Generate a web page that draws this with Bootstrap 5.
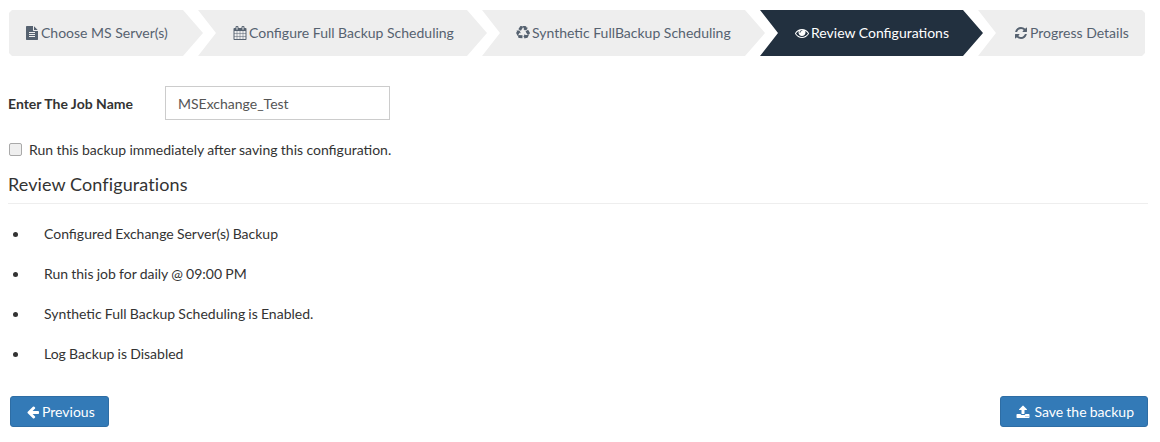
<!DOCTYPE html>
<html lang="en">
<head>
  <meta charset="UTF-8" />
  <title>Review Configurations</title>
  <link href="https://cdn.jsdelivr.net/npm/bootstrap@5.3.0/dist/css/bootstrap.min.css" rel="stylesheet">
  <style>
    body {
      font-family: Lato, sans-serif;
      font-size: 14px;
      color: #333;
      background: #fff;
      overflow: hidden;
    }
    .page-wrap { padding: 10px 12px 0 8px; }
    .wizard-steps { display: flex; height: 46px; margin: 0 3px 0 1px; }
    .wizard-step {
      background: #eee;
      color: #566270;
      height: 46px;
      margin-right: -5px;
      padding-left: 35px;
      padding-bottom: 1px;
      flex: none;
      display: flex;
      align-items: center;
      gap: 2px;
      clip-path: polygon(0 0, calc(100% - 20px) 0, 100% 50%, calc(100% - 20px) 100%, 0 100%, 18px 50%);
    }
    .wizard-step:first-child {
      padding-left: 16px;
      clip-path: polygon(3px 0, calc(100% - 20px) 0, 100% 50%, calc(100% - 20px) 100%, 3px 100%, 0 calc(100% - 3px), 0 3px);
    }
    .wizard-step:last-child {
      flex: 1 1 auto;
      margin-right: 0;
      padding-left: 36px;
      clip-path: polygon(0 0, calc(100% - 3px) 0, 100% 3px, 100% calc(100% - 3px), calc(100% - 3px) 100%, 0 100%, 18px 50%);
    }
    .wizard-step.current { background: #22303f; color: #fff; }
    .step-synth { padding-left: 34px; }
    .step-icon { width: 14px; height: 14px; fill: currentColor; flex: none; }
    .job-label { font-weight: 700; width: 157px; margin: 0; }
    .job-input {
      width: 225px; height: 34px; border-radius: 0; font-size: 14px;
      color: #555; border-color: #ccc; padding: 6px 12px;
    }
    .run-check { margin-top: 19px; padding-left: 0; min-height: 0; word-spacing: -0.3px; }
    .run-check input {
      appearance: none; width: 13px; height: 13px; margin: 0 7px 0 1px;
      background: #efefef; border: 1px solid #a9a9a9; border-radius: 2px;
    }
    .review-title {
      font-size: 18px; font-weight: 400; margin: 11px 0 0; letter-spacing: .1px;
      padding-bottom: 6px; border-bottom: 1px solid #eee;
      color: #333; line-height: 26px;
    }
    .review-items { margin: 10px 0 0; padding: 0 0 0 36px; list-style: none; word-spacing: -0.4px; }
    .review-items li { line-height: 20px; padding: 10px 0; position: relative; }
    .review-items li::before {
      content: ""; position: absolute; left: -31px; top: 18px;
      width: 5px; height: 5px; border-radius: 50%; background: #333;
    }
    .action-btn {
      background: #337ab7; border: 1px solid #2e6da4; color: #fff;
      font-size: 14px; border-radius: 3px; height: 31px; padding: 0 13px 0 15px;
      display: inline-flex; align-items: center; gap: 2px;
    }
    .action-btn:hover { background: #286090; color: #fff; }
    .save-btn { gap: 4px; word-spacing: -0.4px; }
  </style>
</head>
<body>
<div class="page-wrap">
  <div class="wizard-steps">
    <div class="wizard-step" style="width: 194px"><svg class="step-icon" viewBox="0 0 1792 1792"><path d="M1596 476q14 14 28 36h-472v-472q22 14 36 28zm-476 164h544v1056q0 40-28 68t-68 28h-1344q-40 0-68-28t-28-68v-1600q0-40 28-68t68-28h800v544q0 40 28 68t68 28zm160 736v-64q0-14-9-23t-23-9h-704q-14 0-23 9t-9 23v64q0 14 9 23t23 9h704q14 0 23-9t9-23zm0-256v-64q0-14-9-23t-23-9h-704q-14 0-23 9t-9 23v64q0 14 9 23t23 9h704q14 0 23-9t9-23zm0-256v-64q0-14-9-23t-23-9h-704q-14 0-23 9t-9 23v64q0 14 9 23t23 9h704q14 0 23-9t9-23z"/></svg>Choose MS Server(s)</div>
    <div class="wizard-step" style="width: 289px"><svg class="step-icon" viewBox="0 0 1792 1792"><path d="M192 1664h288v-288h-288v288zm352 0h320v-288h-320v288zm-352-352h288v-320h-288v320zm352 0h320v-320h-320v320zm-352-384h288v-288h-288v288zm736 736h320v-288h-320v288zm-384-736h320v-288h-320v288zm768 736h288v-288h-288v288zm-384-352h320v-320h-320v320zm-352-864v-288q0-13-9.500-22.500t-22.500-9.500h-64q-13 0-22.500 9.500t-9.500 22.500v288q0 13 9.500 22.500t22.500 9.500h64q13 0 22.500-9.500t9.500-22.500zm736 864h288v-320h-288v320zm-384-384h320v-288h-320v288zm384 0h288v-288h-288v288zm32-480v-288q0-13-9.500-22.500t-22.500-9.500h-64q-13 0-22.500 9.500t-9.500 22.500v288q0 13 9.500 22.500t22.500 9.500h64q13 0 22.500-9.500t9.500-22.500zm384-64v1280q0 52-38 90t-90 38h-1408q-52 0-90-38t-38-90v-1280q0-52 38-90t90-38h128v-96q0-66 47-113t113-47h64q66 0 113 47t47 113v96h384v-96q0-66 47-113t113-47h64q66 0 113 47t47 113v96h128q52 0 90 38t38 90z"/></svg>Configure Full Backup Scheduling</div>
    <div class="wizard-step step-synth" style="width: 283px"><svg class="step-icon" viewBox="0 0 1792 1792"><path d="M836 1169l-15 368-2 22-420-29q-36-3-67-31.500t-47-65.500q-11-27-14.500-55t4-65 12-55 21.500-64 19-53q78 12 509 28zm-387-586l180 379-147-92q-63 72-111.500 144.500t-72.500 125-39.500 94.500-18.500 63l-4 21-190-357q-17-26-18-56t6-47l8-18q35-63 114-188l-140-86zm1231 517l-188 359q-12 29-36.500 46.500t-43.500 20.500l-18 4q-71 7-219 12l8 164-230-367 211-362 7 173q170 16 283 5t170-33zm-785-924q-47 63-265 435l-317-187-19-12 225-356q20-31 60-45t80-10q24 2 48.500 12t42 21 41.500 33 36 34.500 36 39.500 32 35zm655 307l212 363q18 37 12.500 76t-27.500 74q-13 20-33 37t-38 28-48.500 22-47 16-51.500 14-46 12q-34-72-265-436l313-195zm-143-226l142-83-220 373-419-20 151-86q-34-89-75-166t-75.500-123.500-64.500-80-47-46.500l-17-13 405 1q31-3 58 10.500t39 28.500l11 15q39 61 112 190z"/></svg>Synthetic FullBackup Scheduling</div>
    <div class="wizard-step current" style="width: 223px"><svg class="step-icon" viewBox="0 0 1792 1792"><path d="M1664 960q-152-236-381-353 61 104 61 225 0 185-131.500 316.500t-316.500 131.500-316.500-131.500-131.500-316.500q0-121 61-225-229 117-381 353 133 205 333.500 326.500t434.500 121.500 434.500-121.500 333.500-326.500zm-720-384q0-20-14-34t-34-14q-125 0-214.500 89.500t-89.500 214.500q0 20 14 34t34 14 34-14 14-34q0-86 61-147t147-61q20 0 34-14t14-34zm848 384q0 34-20 69-140 230-376.500 368.500t-499.500 138.500-499.500-139-376.500-368q-20-35-20-69t20-69q140-229 376.500-368t499.500-139 499.500 139 376.500 368q20 35 20 69z"/></svg>Review Configurations</div>
    <div class="wizard-step"><svg class="step-icon" viewBox="0 0 1792 1792"><path d="M1639 1056q0 5-1 7-64 268-268 434.500t-478 166.500q-146 0-282.500-55t-243.500-157l-129 129q-19 19-45 19t-45-19-19-45v-448q0-26 19-45t45-19h448q26 0 45 19t19 45-19 45l-137 137q71 66 161 102t187 36q134 0 250-65t186-179q11-17 53-117 8-23 30-23h192q13 0 22.500 9.500t9.500 22.500zm25-800v448q0 26-19 45t-45 19h-448q-26 0-45-19t-19-45 19-45l138-138q-148-137-349-137-134 0-250 65t-186 179q-11 17-53 117-8 23-30 23h-199q-13 0-22.500-9.500t-9.500-22.500v-7q65-268 270-434.500t480-166.500q146 0 284 55.500t245 156.500l130-129q19-19 45-19t45 19 19 45z"/></svg>Progress Details</div>
  </div>

  <div class="d-flex align-items-center" style="margin-top: 30px">
    <label class="job-label" for="jobName">Enter The Job Name</label>
    <input id="jobName" class="form-control job-input" value="MSExchange_Test">
  </div>

  <div class="form-check run-check d-flex align-items-center">
    <input type="checkbox" id="runNow">
    <label for="runNow">Run this backup immediately after saving this configuration.</label>
  </div>

  <h4 class="review-title">Review Configurations</h4>
  <ul class="review-items">
    <li>Configured Exchange Server(s) Backup</li>
    <li>Run this job for daily @ 09:00 PM</li>
    <li>Synthetic Full Backup Scheduling is Enabled.</li>
    <li>Log Backup is Disabled</li>
  </ul>

  <div class="d-flex justify-content-between" style="margin: 22px 0 0 2px">
    <button class="btn action-btn"><svg class="step-icon" viewBox="0 0 1792 1792"><path d="M1664 896v128q0 53-32.500 90.500t-84.500 37.500h-704l293 294q38 36 38 90t-38 90l-75 76q-37 37-90 37-52 0-91-37l-651-652q-37-37-37-90 0-52 37-91l651-650q38-38 91-38 52 0 90 38l75 74q38 38 38 91t-38 91l-293 293h704q52 0 84.500 37.500t32.500 90.500z"/></svg>Previous</button>
    <button class="btn action-btn save-btn"><svg class="step-icon" viewBox="0 0 1792 1792"><path d="M1344 1472q0-26-19-45t-45-19-45 19-19 45 19 45 45 19 45-19 19-45zm256 0q0-26-19-45t-45-19-45 19-19 45 19 45 45 19 45-19 19-45zm128-224v320q0 40-28 68t-68 28h-1472q-40 0-68-28t-28-68v-320q0-40 28-68t68-28h427q21 56 70.500 92t110.500 36h256q61 0 110.500-36t70.500-92h427q40 0 68 28t28 68zm-325-648q-17 40-59 40h-256v448q0 26-19 45t-45 19h-256q-26 0-45-19t-19-45v-448h-256q-42 0-59-40-17-39 14-69l448-448q18-19 45-19t45 19l448 448q31 30 14 69z"/></svg>Save the backup</button>
  </div>
</div>
<script src="https://cdn.jsdelivr.net/npm/bootstrap@5.3.0/dist/js/bootstrap.bundle.min.js"></script>
</body>
</html>
